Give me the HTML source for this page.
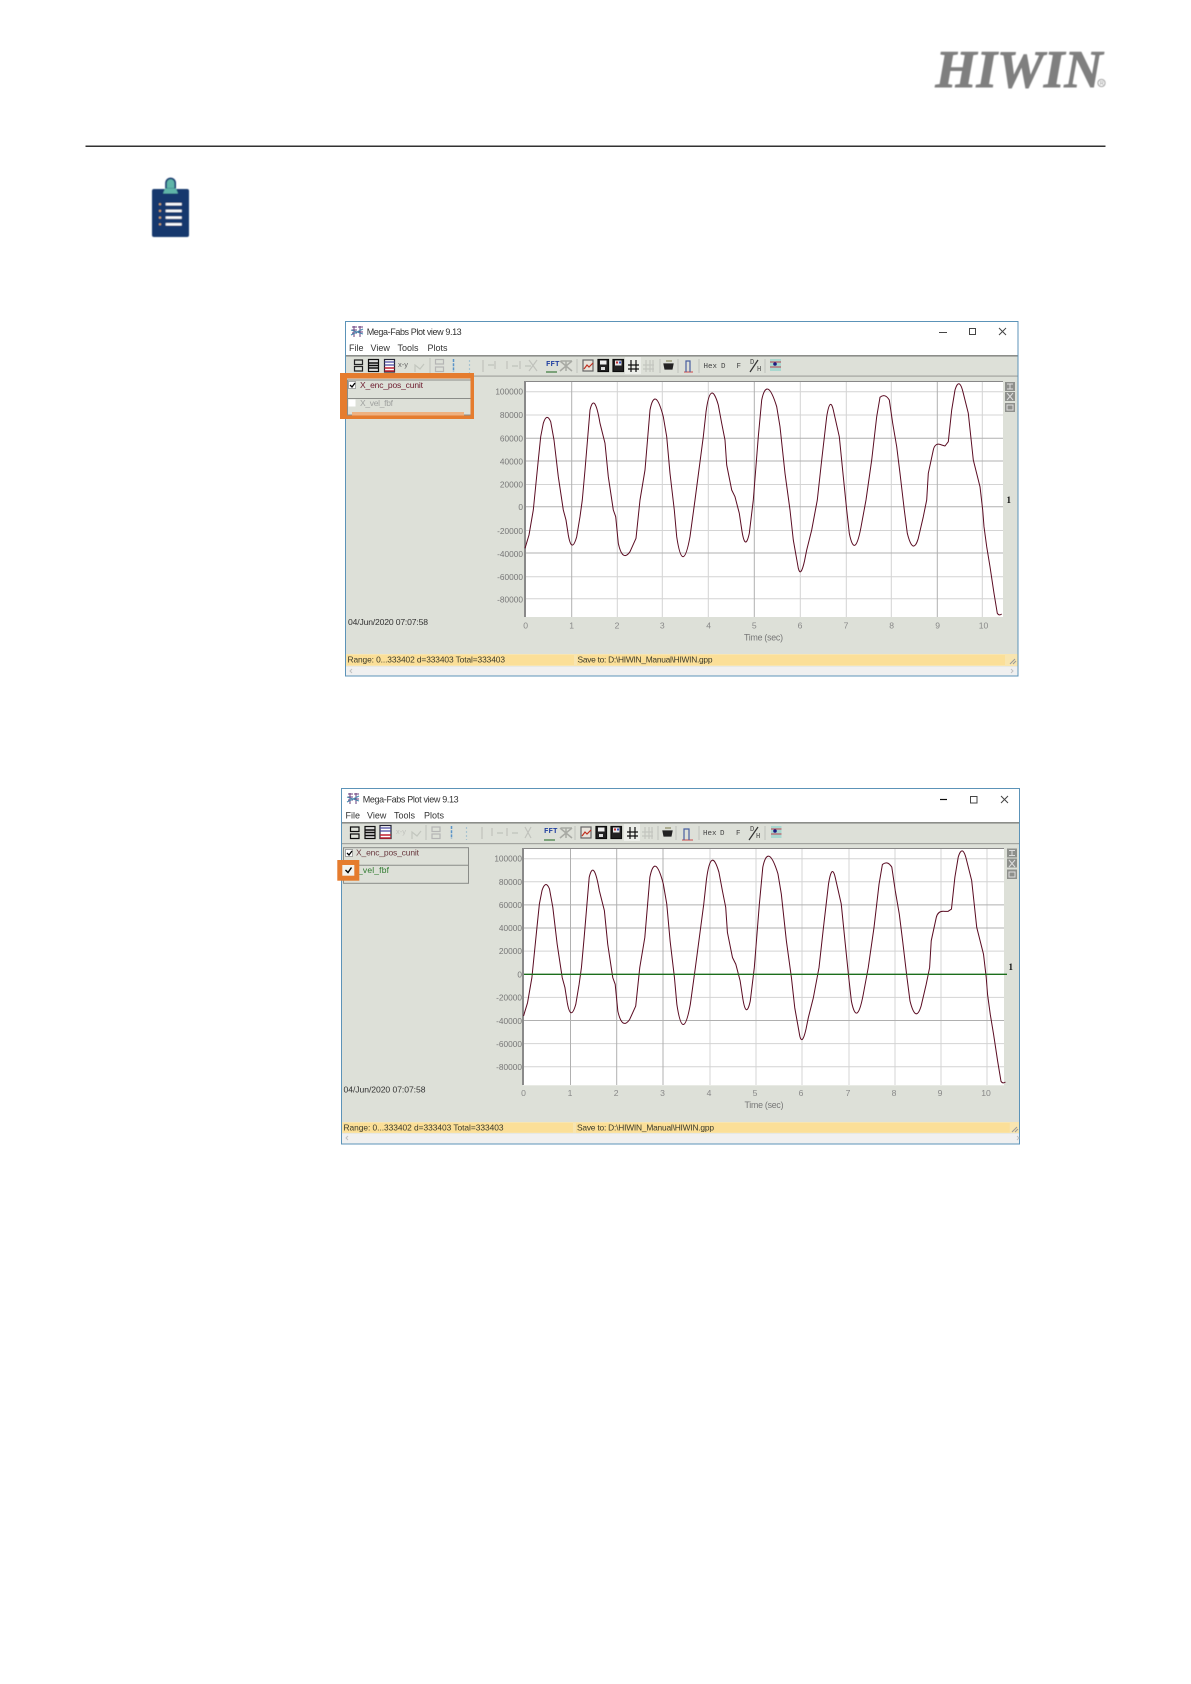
<!DOCTYPE html>
<html><head><meta charset="utf-8"><title>Mega-Fabs Plot view</title>
<style>
html,body{margin:0;padding:0;background:#fff}
svg{display:block}
text{font-family:"Liberation Sans",sans-serif}
.y{font-size:8.3px;fill:#777;text-anchor:end}
.x{font-size:8.6px;fill:#888;text-anchor:middle}
.k{font-size:9px;fill:#333}
.g1{stroke:#d4d4d4;stroke-width:1;fill:none}
.g2{stroke:#b0b0b0;stroke-width:1;fill:none}
.c{fill:none;stroke:#5a0a22;stroke-width:1;stroke-linejoin:round}
.tb{font-size:7.5px;font-family:"Liberation Mono",monospace;fill:#444}
</style></head><body>
<svg width="1191" height="1684" viewBox="0 0 1191 1684" xmlns="http://www.w3.org/2000/svg">
<defs><filter id="b" x="-2%" y="-2%" width="104%" height="104%"><feGaussianBlur stdDeviation="0.35"/></filter>
<filter id="b2"><feGaussianBlur stdDeviation="0.5"/></filter></defs>
<rect width="1191" height="1684" fill="#fff"/>

<!-- logo -->
<g filter="url(#b2)">
<text x="935.5" y="87" font-size="53" textLength="167" lengthAdjust="spacingAndGlyphs" style="font-family:'Liberation Serif',serif;font-weight:bold;font-style:italic;fill:#7f7f7f;stroke:#7f7f7f;stroke-width:.9">HIWIN</text>
<circle cx="1101.5" cy="83" r="3.6" fill="none" stroke="#8a8a8a" stroke-width=".8"/>
<text x="1099.7" y="85" font-size="5.5" style="fill:#888">R</text>
</g>
<rect x="85.5" y="145.6" width="1020" height="1.2" fill="#000"/>

<!-- clipboard icon -->
<g filter="url(#b2)">
<rect x="152" y="189" width="37" height="48" rx="2" fill="#14396d"/>
<path d="M166 189v-6a4.6 4.6 0 0 1 9.2 0v6z" fill="#5fb5a8" stroke="#14396d" stroke-width="1.6"/>
<path d="M163 193.500l2-5h11l2 5z" fill="#5fb5a8"/>
<g fill="#fff"><rect x="165.700" y="203" width="16" height="2.400"/><rect x="165.700" y="209.700" width="16" height="2.400"/><rect x="165.700" y="216.400" width="16" height="2.400"/><rect x="165.700" y="223.100" width="16" height="2.400"/></g>
<g fill="#d9a869"><circle cx="160" cy="204.200" r="1.100"/><circle cx="160" cy="210.900" r="1.100"/><circle cx="160" cy="217.600" r="1.100"/><circle cx="160" cy="224.300" r="1.100"/></g>
</g>

<!-- WINDOW 1 -->
<g filter="url(#b)">
<rect x="345.500" y="321.500" width="672.500" height="354.500" fill="#dde0d8" stroke="#5b93b8" stroke-width="1"/>
<rect x="346" y="322" width="671.500" height="33" fill="#fff"/>
<rect x="346" y="355" width="671.500" height="1.600" fill="#8c8e8a"/>
<rect x="346" y="375.500" width="671.500" height="1.200" fill="#a3a5a0"/>
<!-- title -->
<g stroke-width="1" fill="none"><path d="M352 327h5M352 330h5M352 333h5M354 326v11M358 327h5M358 332h5M360 326v11" stroke="#6a3c7c"/><path d="M351 330l12 4M351 335l12-6" stroke="#4a8ab0"/></g>
<text x="366.700" y="335.200" font-size="9" textLength="95" style="fill:#333">Mega-Fabs Plot view 9.13</text>
<text class="k" x="349" y="351.200">File</text><text class="k" x="370.500" y="351.200">View</text><text class="k" x="397.500" y="351.200">Tools</text><text class="k" x="427.500" y="351.200">Plots</text>
<path d="M939 332.500h8" stroke="#444"/><rect x="969.500" y="328.500" width="6" height="6" fill="none" stroke="#444"/><path d="M999 328l7 7M1006 328l-7 7" stroke="#444"/>
<!-- toolbar -->
<g fill="none" stroke-width="1.200">
<path d="M354.500 360h8v4.500h-8zM354.500 366.500h8v4.500h-8z" stroke="#222"/>
<rect x="368.500" y="359.500" width="10" height="12" stroke="#111" fill="#ddd"/><path d="M368.500 363h10M368.500 365.500h10M368.500 368h10" stroke="#111" stroke-width="1.500"/>
<rect x="384.500" y="359.500" width="10" height="12.500" fill="#fff" stroke="#223"/><path d="M384.500 362h10M384.500 365h10" stroke="#4a4aa0"/><path d="M384.500 368h10M384.500 371h10" stroke="#c02030" stroke-width="1.500"/>
<path d="M415 372v-7l5 4 4-5" stroke="#c2c6be"/>
<path d="M430 358v15" stroke="#c5c7c1"/>
<rect x="435.500" y="359.500" width="8" height="4.500" stroke="#b5b5b5"/><rect x="435.500" y="367" width="8" height="4.500" stroke="#b5b5b5"/>
<path d="M453.500 359v13" stroke="#5a93c7" stroke-dasharray="3 1.200" stroke-width="1.500"/><path d="M469.500 360v13" stroke="#a8c4d0" stroke-dasharray="2 2"/>
<path d="M483 360v12M495 361v8M488 365h6M507 361v8M512 366h6M520 361v8M525 366h6M529 360l8 11M537 360l-8 11" stroke="#c0c2bc"/>
<path d="M546 372h11" stroke="#3a7a3a"/><path d="M560 361l12 10M572 361l-12 10M561 361h11M566 361v10" stroke="#a8aaa4" stroke-width="1.500"/>
<path d="M577 359v14" stroke="#c5c7c1"/>
<rect x="583" y="360" width="10" height="11" stroke="#666" fill="#e8e4dc"/><path d="M584 369l3-4 2 2 4-4" stroke="#c03020"/>
<rect x="598" y="359.500" width="10.500" height="12" fill="#222" stroke="#111"/><rect x="600" y="360.500" width="6.500" height="4" fill="#eee" stroke="none"/><rect x="601" y="367" width="4" height="3" fill="#ddd" stroke="none"/>
<rect x="613" y="359.500" width="10.500" height="12" fill="#222" stroke="#111"/><rect x="615" y="360.500" width="6.500" height="5" fill="#e8e8e8" stroke="none"/><rect x="616" y="361.500" width="2" height="2" fill="#c03030" stroke="none"/><rect x="619" y="361.500" width="2" height="2" fill="#3050c0" stroke="none"/>
<rect x="625" y="357" width="16" height="17" fill="#eceee9" stroke="none"/><path d="M628 365h11M628 369h11M631 360v12M636 360v12" stroke="#111" stroke-width="1.200"/>
<path d="M643 365h11M643 369h11M646 360v12M650 360v12M653 360v12" stroke="#c3c5bf"/>
<path d="M660 359v14M678 359v14" stroke="#c5c7c1"/>
<path d="M664 364h9l-1 5h-7z" fill="#222" stroke="#222"/><path d="M666 361h6" stroke="#8a8a60"/>
<path d="M684 372h9" stroke="#d06060"/><path d="M686 372v-11h4v11" stroke="#4a5fa0"/>
<path d="M699 359v14M765 359v14" stroke="#c5c7c1"/>
<path d="M750 372l8-12" stroke="#333"/>
</g>
<text x="398" y="367" font-size="7.500" style="fill:#666">x-y</text>
<text x="546" y="366" font-size="7.500" font-weight="bold" style="fill:#2040a0;font-family:'Liberation Mono',monospace">FFT</text>
<text class="tb" x="703.500" y="368">Hex</text><text class="tb" x="721" y="368">D</text><text class="tb" x="736.500" y="368">F</text>
<text class="tb" x="750" y="364" style="font-size:7px">D</text><text class="tb" x="757" y="371" style="font-size:7px">H</text>
<rect x="770" y="359" width="11" height="12" fill="#a9d8cf"/><path d="M770 362h11M770 367h11" stroke="#c04050"/><circle cx="775" cy="364" r="1.800" fill="#1a1a80"/>

<!-- list -->
<rect x="347.500" y="380" width="125" height="35" fill="none" stroke="#8a8c88"/>
<path d="M347 398.500h125" stroke="#8a8c88"/>
<rect x="348.500" y="381.500" width="7" height="7" fill="#fff" stroke="#777" stroke-width=".6"/><path d="M350 385l2 2 3-4" stroke="#000" fill="none" stroke-width="1.300"/>
<text x="360" y="388" font-size="8.500" textLength="63" style="fill:#6d1a2e">X_enc_pos_cunit</text>
<rect x="348.500" y="399.500" width="7" height="7" fill="#fff"/>
<text x="360" y="406" font-size="8.500" textLength="33" style="fill:#a0a2a0">X_vel_fbf</text>
<rect x="352" y="412" width="112" height="4" fill="#eeb180"/>
<g fill="#e57b2e"><rect x="340" y="373" width="134" height="5.500"/><rect x="340" y="373" width="7" height="46"/><rect x="470.500" y="373" width="3.500" height="46"/><rect x="340" y="415.500" width="134" height="3.500"/></g>

<!-- plot -->
<rect x="525" y="381" width="478" height="236" fill="#fff"/>
<g class="g1"><path d="M525 391.700h478M525 415h478M525 484.500h478M525 530.500h478M525 576.700h478M525 598.700h478M617.300 381v236M662.300 381v236M708.300 381v236M800.300 381v236M846.300 381v236M891.300 381v236M982.300 381v236"/></g>
<g class="g2"><path d="M525 438.300h478M525 461h478M525 506.700h478M525 553h478M571.700 381v236M754.300 381v236M937.300 381v236"/></g>
<path d="M525 381.500h478" stroke="#888" stroke-width="1"/><path d="M525 381v236" stroke="#8a8a8a" stroke-width="2"/>
<path class="c" d="M525 548.300L529 535 533.300 510 538.300 460 540.700 436.700 543.300 423.300Q546.700 412.200 550.700 421.700L554 440 558.300 476.700 563.300 510 566 520 568.300 535Q571.700 554.200 576.700 536.700L580 516.700 582.300 500 585 470 590 410Q594.500 391 600 423.300L605 443.300 608.300 476.700 613.300 510 615.700 516.700 618.300 543.300Q622.500 562.500 630 551.700L636 538.300 640 500 645 470 650 410Q655 385 663.300 416.700L666.700 436.700 670 473.300 674.300 510 676.700 536.700Q682.700 576.700 690 536.700L695 500 703.300 436.700 706 412Q710.500 378 718.300 405L721.700 423.300 725 440 726.700 465 731.700 490 735 496.700 739.300 513.300 741.500 528Q745 553 749.300 533.300L753.300 500 758.300 436.700 761.700 400Q767 375 776.700 406.700L780 426.700 785 473.300 790 510 793.300 540 798.300 568.300Q800.700 578 804.500 561L806.700 550 811.700 530 817.300 500 821.700 460 826.700 416.700Q830 396 833.300 410L839.300 436.700 843.300 476.700 846.700 510 849.300 533.300Q855 561.700 861.700 523.300L866 500 871.700 460 876.700 416.700 880 397.300Q885 393 889.300 400L892.700 423.300 896.700 446.700 900 473.300 904.300 510 907.300 533.300Q913 556 918.300 538.300L923.300 516.700 926.700 500 928.300 473.300 933.300 450Q935 442 941.700 445L945 446 948.300 441.700 951.700 410 955 390Q959.300 376 963.300 393.300L968.300 413.300 973.300 460 980 486.700 982.700 510 984 526.700 986.700 546.700 990 566.700 994 593.300 997.300 613.300Q999 616 1001.700 614"/>
<text class="y" x="523" y="394.500">100000</text><text class="y" x="523" y="418">80000</text><text class="y" x="523" y="441.500">60000</text><text class="y" x="523" y="464.500">40000</text><text class="y" x="523" y="487.500">20000</text><text class="y" x="523" y="510">0</text><text class="y" x="523" y="534">-20000</text><text class="y" x="523" y="557">-40000</text><text class="y" x="523" y="580">-60000</text><text class="y" x="523" y="602.500">-80000</text>
<text class="x" x="525.700" y="628.500">0</text><text class="x" x="571.700" y="628.500">1</text><text class="x" x="617" y="628.500">2</text><text class="x" x="662.300" y="628.500">3</text><text class="x" x="708.700" y="628.500">4</text><text class="x" x="754.300" y="628.500">5</text><text class="x" x="800" y="628.500">6</text><text class="x" x="846" y="628.500">7</text><text class="x" x="891.700" y="628.500">8</text><text class="x" x="937.700" y="628.500">9</text><text class="x" x="983.500" y="628.500">10</text>
<text x="744" y="640.500" font-size="8.800" textLength="39" style="fill:#777">Time (sec)</text>
<text x="348" y="625" font-size="8.600" textLength="80" style="fill:#333">04/Jun/2020  07:07:58</text>
<g fill="#8e908c"><rect x="1005" y="382" width="10" height="9"/><rect x="1005" y="392" width="10" height="9"/><rect x="1005" y="403" width="10" height="9"/></g>
<path d="M1007 384h6M1007 389h6M1010 384v5M1007 393l6 7M1013 393l-6 7M1007 405h6v5h-6z" stroke="#ddd" fill="none"/>
<text x="1006.500" y="503" font-size="9" font-weight="bold" style="fill:#111;font-family:'Liberation Serif',serif">1</text>
<!-- status -->
<rect x="346" y="654" width="671.500" height="12" fill="#f8e5b0"/>
<rect x="347" y="655" width="227" height="10" fill="#fbdf98"/><rect x="577" y="655" width="428" height="10" fill="#fbdf98"/>
<text x="347.500" y="662.700" font-size="8.400" textLength="157.500" style="fill:#3a3a2a">Range: 0...333402 d=333403 Total=333403</text>
<text x="577.500" y="662.700" font-size="8.400" textLength="135" style="fill:#3a3a2a">Save to: D:\HIWIN_Manual\HIWIN.gpp</text>
<path d="M1010 664l5-5M1013 664l3-3" stroke="#999"/>
<rect x="346" y="666.500" width="671.500" height="9" fill="#f0f0f0"/>
<path d="M352 669l-2 2 2 2M1011 669l2 2-2 2" stroke="#c0c0c0" fill="none"/>
</g>

<!-- WINDOW 2 -->
<g filter="url(#b)">
<rect x="341.500" y="788.500" width="678" height="355.500" fill="#dde0d8" stroke="#5b93b8" stroke-width="1"/>
<rect x="342" y="789" width="677" height="33" fill="#fff"/>
<rect x="342" y="822" width="677" height="1.600" fill="#8c8e8a"/>
<rect x="342" y="843" width="677" height="1.200" fill="#a3a5a0"/>
<g stroke-width="1" fill="none"><path d="M348 794h5M348 797h5M348 800h5M350 793v11M354 794h5M354 799h5M356 793v11" stroke="#6a3c7c"/><path d="M347 797l12 4M347 802l12-6" stroke="#4a8ab0"/></g>
<text x="362.700" y="802.700" font-size="9" textLength="96" style="fill:#333">Mega-Fabs Plot view 9.13</text>
<text class="k" x="345.500" y="818.700">File</text><text class="k" x="367" y="818.700">View</text><text class="k" x="394" y="818.700">Tools</text><text class="k" x="424" y="818.700">Plots</text>
<path d="M940 799.500h7" stroke="#111" stroke-width="1.200"/><rect x="970.500" y="796.500" width="6.500" height="6.500" fill="none" stroke="#444"/><path d="M1001 796l7 7M1008 796l-7 7" stroke="#444"/>
<g fill="none" stroke-width="1.200">
<path d="M350.500 827h8.500v4.500h-8.500zM350.500 834h8.500v4.500h-8.500z" stroke="#111"/>
<rect x="365" y="826.500" width="10" height="12" stroke="#111" fill="#ddd"/><path d="M365 830h10M365 832.500h10M365 835.500h10" stroke="#111" stroke-width="1.500"/>
<rect x="380" y="825.500" width="11" height="13" fill="#fff" stroke="#223"/><path d="M380 828h11M380 831h11" stroke="#4a4aa0"/><path d="M380 835h11M380 838h11" stroke="#c02030" stroke-width="1.500"/>
<path d="M412 839v-7l5 4 4-5" stroke="#c2c6be"/>
<path d="M426 825v15" stroke="#c5c7c1"/>
<rect x="432" y="827" width="8" height="4.500" stroke="#b5b5b5"/><rect x="432" y="834" width="8" height="4.500" stroke="#b5b5b5"/>
<path d="M451.500 826v13" stroke="#5a93c7" stroke-dasharray="3 1.200" stroke-width="1.500"/><path d="M466.500 827v13" stroke="#a8c4d0" stroke-dasharray="2 2"/>
<path d="M482 827v12M492 828v8M497 833h6M507 828v8M512 833h6M525 827l6 11M531 827l-6 11" stroke="#c0c2bc"/>
<path d="M544 840h11" stroke="#3a7a3a"/><path d="M560 828l12 10M572 828l-12 10M561 828h11M566 828v10" stroke="#a8aaa4" stroke-width="1.500"/>
<path d="M575 826v14" stroke="#c5c7c1"/>
<rect x="581" y="827" width="10" height="11" stroke="#666" fill="#e8e4dc"/><path d="M582 836l3-4 2 2 4-4" stroke="#c03020"/>
<rect x="596" y="826.500" width="10.500" height="12" fill="#222" stroke="#111"/><rect x="598" y="827.500" width="6.500" height="4" fill="#eee" stroke="none"/><rect x="599" y="834" width="4" height="3" fill="#ddd" stroke="none"/>
<rect x="611" y="826.500" width="10.500" height="12" fill="#222" stroke="#111"/><rect x="613" y="827.500" width="6.500" height="5" fill="#e8e8e8" stroke="none"/><rect x="614" y="828.500" width="2" height="2" fill="#c03030" stroke="none"/><rect x="617" y="828.500" width="2" height="2" fill="#3050c0" stroke="none"/>
<rect x="624" y="824" width="16" height="17" fill="#eceee9" stroke="none"/><path d="M627 832h11M627 836h11M630 827v12M635 827v12" stroke="#111"/>
<path d="M642 832h11M642 836h11M645 827v12M649 827v12M652 827v12" stroke="#c3c5bf"/>
<path d="M658 826v14M676 826v14" stroke="#c5c7c1"/>
<path d="M663 831h9l-1 5h-7z" fill="#222" stroke="#222"/><path d="M665 828h6" stroke="#8a8a60"/>
<path d="M682 840h11" stroke="#d06060"/><path d="M684 840v-11h5v11" stroke="#4a5fa0"/>
<path d="M699 826v14M765 826v14" stroke="#c5c7c1"/>
<path d="M749 840l9-13" stroke="#333"/>
</g>
<text x="396" y="834" font-size="7.500" style="fill:#c0c2bc">x-y</text>
<text x="544" y="833" font-size="7.500" font-weight="bold" style="fill:#2040a0;font-family:'Liberation Mono',monospace">FFT</text>
<text class="tb" x="703" y="835">Hex</text><text class="tb" x="720" y="835">D</text><text class="tb" x="736" y="835">F</text>
<text class="tb" x="750" y="831" style="font-size:7px">D</text><text class="tb" x="756" y="838" style="font-size:7px">H</text>
<rect x="771" y="826" width="10.500" height="12" fill="#a9d8cf"/><path d="M771 829h10.500M771 834h10.500" stroke="#c04050"/><circle cx="775" cy="831" r="1.800" fill="#1a1a80"/>

<rect x="343.500" y="847.700" width="125" height="35.600" fill="none" stroke="#8a8c88"/>
<path d="M343.500 865.300h125" stroke="#8a8c88"/>
<rect x="345.500" y="849.500" width="7" height="7" fill="#fff" stroke="#777" stroke-width=".6"/><path d="M347 853l2 2 3-4" stroke="#000" fill="none" stroke-width="1.300"/>
<text x="356" y="855.300" font-size="8.500" textLength="63" style="fill:#6a3a40">X_enc_pos_cunit</text>
<text x="358" y="873" font-size="8.500" textLength="31" style="fill:#2f7a2f">_vel_fbf</text>
<rect x="339.800" y="862.500" width="17" height="15.700" fill="#f2f2ee" stroke="#e57b2e" stroke-width="5"/>
<path d="M345.500 870l2.500 2.500 3.500-5" stroke="#000" fill="none" stroke-width="1.400"/>

<rect x="523" y="848" width="481" height="237.300" fill="#fff"/>
<g class="g1"><path d="M523 858.700h481M523 881.800h481M523 951.100h481M523 997.400h481M523 1043.600h481M523 1066.700h481M710 848v237M756 848v237M802 848v237M849 848v237M895 848v237M941 848v237M987 848v237"/></g>
<g class="g2"><path d="M523 904.900h481M523 928h481M523 1020.500h481M570.500 848v237M616.700 848v237M663 848v237"/></g>
<path d="M523 848.500h481" stroke="#888"/><path d="M523 848v237" stroke="#8a8a8a" stroke-width="2"/>
<path class="c" transform="translate(523.500 974.300) scale(1.011 1.004) translate(-525 -506.700)" d="M525 548.300L529 535 533.300 510 538.300 460 540.700 436.700 543.300 423.300Q546.700 412.200 550.700 421.700L554 440 558.300 476.700 563.300 510 566 520 568.300 535Q571.700 554.200 576.700 536.700L580 516.700 582.300 500 585 470 590 410Q594.500 391 600 423.300L605 443.300 608.300 476.700 613.300 510 615.700 516.700 618.300 543.300Q622.500 562.500 630 551.700L636 538.300 640 500 645 470 650 410Q655 385 663.300 416.700L666.700 436.700 670 473.300 674.300 510 676.700 536.700Q682.700 576.700 690 536.700L695 500 703.300 436.700 706 412Q710.500 378 718.300 405L721.700 423.300 725 440 726.700 465 731.700 490 735 496.700 739.300 513.300 741.500 528Q745 553 749.300 533.300L753.300 500 758.300 436.700 761.700 400Q767 375 776.700 406.700L780 426.700 785 473.300 790 510 793.300 540 798.300 568.300Q800.700 578 804.500 561L806.700 550 811.700 530 817.300 500 821.700 460 826.700 416.700Q830 396 833.300 410L839.300 436.700 843.300 476.700 846.700 510 849.300 533.300Q855 561.700 861.700 523.300L866 500 871.700 460 876.700 416.700 880 397.300Q885 393 889.300 400L892.700 423.300 896.700 446.700 900 473.300 904.300 510 907.300 533.300Q913 556 918.300 538.300L923.300 516.700 926.700 500 928.300 473.300 933.300 450Q935 443 941.700 444L945 444 948.300 441.700 951.700 410 955 390Q959.300 376 963.300 393.300L968.300 413.300 973.300 460 980 486.700 982.700 510 984 526.700 986.700 546.700 990 566.700 994 593.300 997.300 613.300Q999 616 1001.700 614"/>
<path d="M524 974.300h483" stroke="#1a6e1a" stroke-width="1.300"/>
<text class="y" x="522" y="861.500">100000</text><text class="y" x="522" y="885">80000</text><text class="y" x="522" y="908">60000</text><text class="y" x="522" y="931">40000</text><text class="y" x="522" y="954">20000</text><text class="y" x="522" y="977.500">0</text><text class="y" x="522" y="1000.700">-20000</text><text class="y" x="522" y="1024">-40000</text><text class="y" x="522" y="1047">-60000</text><text class="y" x="522" y="1070">-80000</text>
<text class="x" x="523.500" y="1096">0</text><text class="x" x="570" y="1096">1</text><text class="x" x="616.200" y="1096">2</text><text class="x" x="662.500" y="1096">3</text><text class="x" x="709" y="1096">4</text><text class="x" x="755" y="1096">5</text><text class="x" x="801" y="1096">6</text><text class="x" x="848" y="1096">7</text><text class="x" x="894" y="1096">8</text><text class="x" x="940" y="1096">9</text><text class="x" x="986" y="1096">10</text>
<text x="744.500" y="1108" font-size="8.800" textLength="39" style="fill:#777">Time (sec)</text>
<text x="343.500" y="1092.700" font-size="8.600" textLength="82" style="fill:#333">04/Jun/2020  07:07:58</text>
<g fill="#8e908c"><rect x="1007" y="848.500" width="10" height="9"/><rect x="1007" y="858.500" width="10" height="9"/><rect x="1007" y="869.500" width="10" height="9.500"/></g>
<path d="M1009 850.500h6M1009 855.500h6M1012 850.500v5M1009 860l6 7M1015 860l-6 7M1009 872h6v5h-6z" stroke="#ddd" fill="none"/>
<text x="1008.500" y="970" font-size="9" font-weight="bold" style="fill:#111;font-family:'Liberation Serif',serif">1</text>
<rect x="342" y="1122" width="677" height="11" fill="#f8e5b0"/>
<rect x="343" y="1123" width="230" height="9.500" fill="#fbdf98"/><rect x="576" y="1123" width="433.700" height="9.500" fill="#fbdf98"/>
<text x="343.500" y="1130.600" font-size="8.400" textLength="160" style="fill:#3a3a2a">Range: 0...333402 d=333403 Total=333403</text>
<text x="577" y="1130.600" font-size="8.400" textLength="137" style="fill:#3a3a2a">Save to: D:\HIWIN_Manual\HIWIN.gpp</text>
<path d="M1012 1132l5-5M1015 1132l3-3" stroke="#999"/>
<rect x="342" y="1133.500" width="677" height="10" fill="#f0f0f0"/>
<path d="M348 1136l-2 2 2 2M1017 1136l2 2-2 2" stroke="#c0c0c0" fill="none"/>
</g>
</svg>
</body></html>
